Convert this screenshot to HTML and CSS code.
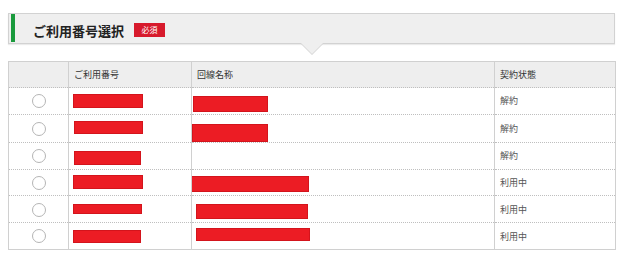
FILE: index.html
```html
<!DOCTYPE html>
<html lang="ja">
<head>
<meta charset="utf-8">
<link rel="stylesheet" href="styles.css">
</head>
<body>
<div class="page">
  <div class="heading">
    <h2 class="heading-title">ご利用番号選択</h2>
    <span class="badge">必須</span>
  </div>
  <table class="lines">
    <thead>
      <tr>
        <th class="c-radio"></th>
        <th class="c-num">ご利用番号</th>
        <th class="c-name">回線名称</th>
        <th class="c-state">契約状態</th>
      </tr>
    </thead>
    <tbody>
      <tr>
        <td class="c-radio"><span class="radio"></span></td>
        <td class="c-num"><div class="bar n1"></div></td>
        <td class="c-name"><div class="bar m1"></div></td>
        <td class="c-state">解約</td>
      </tr>
      <tr>
        <td class="c-radio"><span class="radio"></span></td>
        <td class="c-num"><div class="bar n2"></div></td>
        <td class="c-name"><div class="bar m2"></div></td>
        <td class="c-state">解約</td>
      </tr>
      <tr>
        <td class="c-radio"><span class="radio"></span></td>
        <td class="c-num"><div class="bar n3"></div></td>
        <td class="c-name"></td>
        <td class="c-state">解約</td>
      </tr>
      <tr>
        <td class="c-radio"><span class="radio"></span></td>
        <td class="c-num"><div class="bar n4"></div></td>
        <td class="c-name"><div class="bar m4"></div></td>
        <td class="c-state">利用中</td>
      </tr>
      <tr>
        <td class="c-radio"><span class="radio"></span></td>
        <td class="c-num"><div class="bar n5"></div></td>
        <td class="c-name"><div class="bar m5"></div></td>
        <td class="c-state">利用中</td>
      </tr>
      <tr>
        <td class="c-radio"><span class="radio"></span></td>
        <td class="c-num"><div class="bar n6"></div></td>
        <td class="c-name"><div class="bar m6"></div></td>
        <td class="c-state">利用中</td>
      </tr>
    </tbody>
  </table>
</div>
</body>
</html>
```
FILE: styles.css
```css
html, body {
  margin: 0;
  padding: 0;
  background: #ffffff;
}
body {
  font-family: "Noto Sans CJK JP", "Noto Sans", sans-serif;
  color: #333333;
}
.page {
  padding: 13px 5px 0 8px;
  width: 607px;
}
.heading {
  position: relative;
  box-sizing: border-box;
  height: 31px;
  background: #efefef;
  border: 1px solid #d2d2d2;
  box-shadow: 0 1px 1px rgba(0, 0, 0, 0.08);
  display: flex;
  align-items: center;
  padding: 3px 0 0 24px;
}
.heading::before {
  content: "";
  position: absolute;
  left: 2px;
  top: 0;
  width: 4px;
  height: 28px;
  background: #1a9a3c;
}
.heading::after {
  content: "";
  position: absolute;
  left: 50%;
  bottom: -11px;
  margin-left: -11px;
  width: 0;
  height: 0;
  border-left: 11px solid transparent;
  border-right: 11px solid transparent;
  border-top: 11px solid #efefef;
  filter: drop-shadow(0 1px 0 #d2d2d2);
}
.heading-title {
  margin: 0;
  font-size: 13px;
  font-weight: bold;
  line-height: 1;
  color: #222222;
}
.badge {
  margin-left: 10px;
  width: 31px;
  height: 14px;
  background: #d71a2c;
  color: #ffffff;
  font-size: 8px;
  line-height: 14px;
  text-align: center;
}
.lines {
  margin-top: 17px;
  width: 607px;
  border-collapse: collapse;
  table-layout: fixed;
  border: 1px solid #d0d0d0;
  font-size: 9px;
}
.lines th {
  background: #eeeeee;
  height: 26px;
  padding: 0 5px;
  text-align: left;
  font-weight: normal;
  color: #333333;
  border-left: 1px solid #d0d0d0;
  border-bottom: 1px dotted #bfbfbf;
  box-sizing: border-box;
}
.lines td {
  height: 26.8px;
  padding: 0 5px;
  border-left: 1px solid #d0d0d0;
  border-bottom: 1px dotted #bfbfbf;
  box-sizing: border-box;
  color: #555555;
  vertical-align: middle;
}
.lines th.c-radio, .lines td.c-radio {
  border-left: none;
}
.c-radio { width: 60px; text-align: center; }
.c-num { width: 123px; }
.c-name { width: 303px; }
.c-state { width: 121px; }
.lines td.c-num, .lines td.c-name {
  vertical-align: top;
  padding: 0;
}
.lines td.c-state { padding-left: 5px; }
.radio {
  display: inline-block;
  width: 12px;
  height: 12px;
  border: 1px solid #b5b5b5;
  border-radius: 50%;
  background: #ffffff;
  vertical-align: middle;
}
.bar {
  background: #ec1c24;
  box-shadow: inset 0 0 0 1px #d3141c;
}
.n1 { margin: 6px 0 0 4px; width: 70px; height: 14px; }
.n2 { margin: 6px 0 0 5px; width: 69px; height: 13px; }
.n3 { margin: 8px 0 0 5px; width: 67px; height: 14px; }
.n4 { margin: 5px 0 0 4px; width: 70px; height: 14px; }
.n5 { margin: 8px 0 0 4px; width: 69px; height: 10px; }
.n6 { margin: 7px 0 0 4px; width: 68px; height: 13px; }
.m1 { margin: 8px 0 0 1px; width: 75px; height: 16px; }
.m2 { margin: 9px 0 0 0; width: 76px; height: 18px; }
.m4 { margin: 6px 0 0 -1px; width: 118px; height: 16px; }
.m5 { margin: 8px 0 0 4px; width: 112px; height: 15px; }
.m6 { margin: 5px 0 0 4px; width: 114px; height: 13px; }
```
